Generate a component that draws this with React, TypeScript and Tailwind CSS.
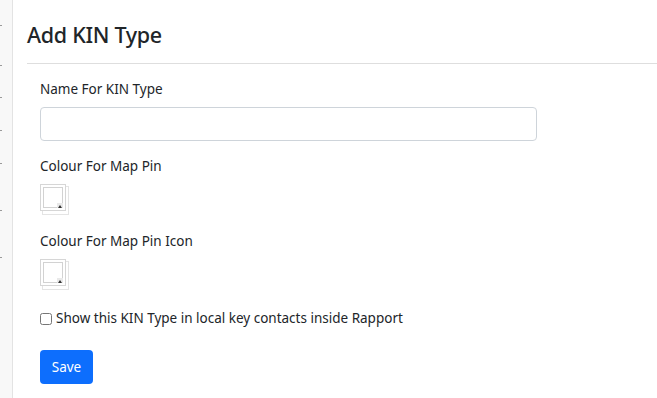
import { useState } from "react";

function ColourSwatch() {
  return (
    <div className="relative w-[29px] h-[31px]">
      <div className="absolute left-[2px] top-[2px] w-[27px] h-[29px] border border-[#e4e4e4] bg-white" />
      <div className="absolute left-0 top-0 w-[26px] h-[27px] border border-[#d6d6d6] bg-white">
        <div className="absolute left-[2px] top-[2px] w-[20px] h-[21px] border border-[#d2d2d2] bg-white" />
        <div className="absolute right-[2px] bottom-[2px] w-[6px] h-[5px] bg-[#e9e9e9] flex items-end justify-center">
          <div className="w-0 h-0 border-l-[2.5px] border-r-[2.5px] border-b-[3px] border-l-transparent border-r-transparent border-b-[#333]" />
        </div>
      </div>
    </div>
  );
}

const TICKS = [25, 65, 97, 130, 163, 210, 257];

export default function App() {
  const [name, setName] = useState("");
  const [showKey, setShowKey] = useState(false);

  return (
    <div
      className="flex w-[657px] h-[398px] overflow-hidden bg-white text-[#212529]"
      style={{ fontFamily: '"Segoe UI", "Noto Sans", "Liberation Sans", sans-serif' }}
    >
      <aside className="relative w-[13px] shrink-0 bg-[#f8f8f8] border-r border-[#e3e3e3]">
        {TICKS.map((t) => (
          <span key={t} className="absolute left-0 w-[2px] h-px bg-[#9a9a9a]" style={{ top: t }} />
        ))}
      </aside>

      <main className="flex-1 pl-[14px]">
        <h3 className="pt-[21px] pb-[14px] text-[21.5px] leading-[28px] font-medium tracking-[-0.3px]">Add KIN Type</h3>
        <hr className="border-t border-[#dedede]" />

        <form className="pl-[13px] pt-[15px]" onSubmit={(e) => e.preventDefault()}>
          <label className="block text-[13.5px] leading-[21px] mb-[7px]">Name For KIN Type</label>
          <input
            type="text"
            value={name}
            onChange={(e) => setName(e.target.value)}
            className="block w-[497px] h-[34px] border border-[#ced4da] rounded-[4px] px-3 text-sm focus:outline-none"
          />

          <label className="block text-[13.5px] leading-[21px] mt-[15px] mb-[7px]">Colour For Map Pin</label>
          <ColourSwatch />

          <label className="block text-[13.5px] leading-[21px] mt-[16px] mb-[7px]">Colour For Map Pin Icon</label>
          <ColourSwatch />

          <label className="flex items-center gap-[4px] mt-[18px] text-[13.5px] leading-[21px]">
            <input
              type="checkbox"
              checked={showKey}
              onChange={(e) => setShowKey(e.target.checked)}
              className="w-[12px] h-[12px] m-0"
            />
            Show this KIN Type in local key contacts inside Rapport
          </label>

          <button
            type="submit"
            className="mt-[21px] w-[53px] h-[34px] rounded-[4px] bg-[#0d6efd] text-white text-[13.5px]"
          >
            Save
          </button>
        </form>
      </main>
    </div>
  );
}
